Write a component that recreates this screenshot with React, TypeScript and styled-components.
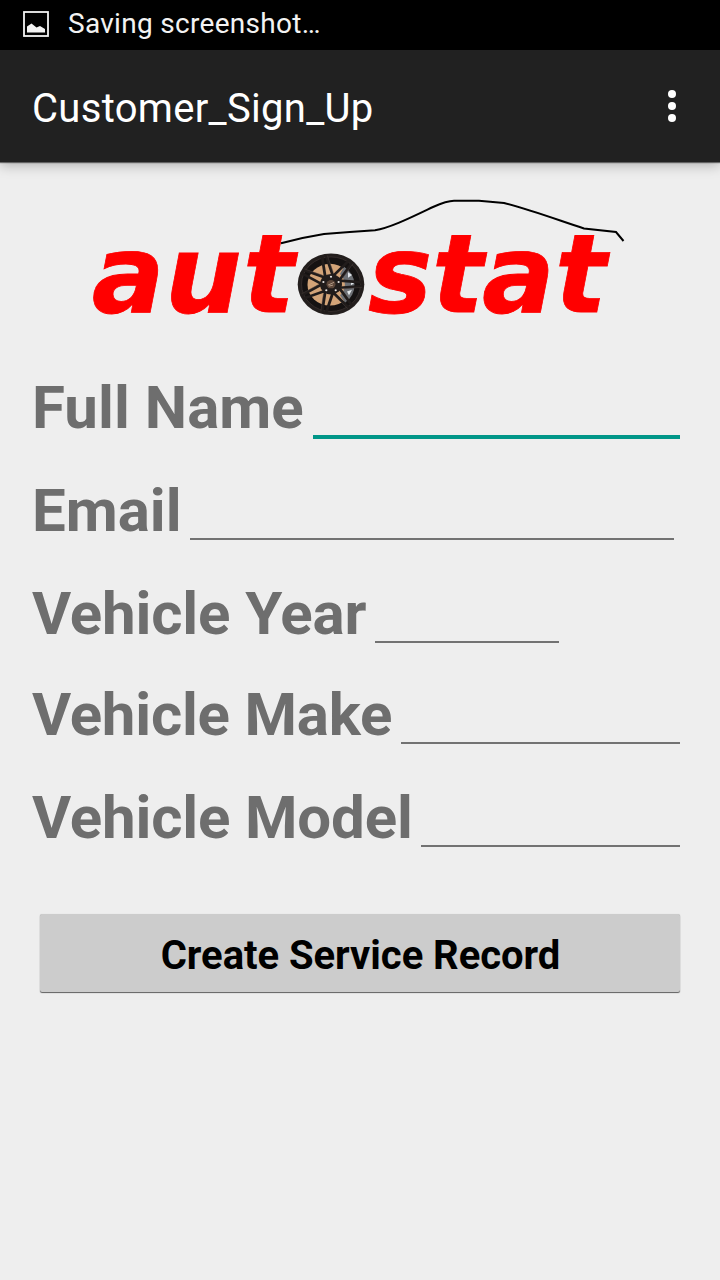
import React from "react";
import styled, { createGlobalStyle } from "styled-components";

const GlobalStyle = createGlobalStyle`
  *, *::before, *::after { box-sizing: border-box; }
  body { margin: 0; background: #eeeeee; font-family: Roboto, "Liberation Sans", sans-serif; }
`;

const Screen = styled.div`
  width: 720px;
  height: 1280px;
  display: flex;
  flex-direction: column;
  background: #eeeeee;
  overflow: hidden;
`;

const StatusBar = styled.div`
  height: 50px;
  padding: 0 23px 2px;
  display: flex;
  align-items: center;
  gap: 19px;
  background: #000;
  color: #f3f3f3;
`;

const StatusText = styled.span`
  padding-bottom: 2px;
  font-size: 28px;
  line-height: 33px;
  letter-spacing: 0.3px;
`;

const AppBar = styled.header`
  height: 112px;
  padding: 0 44px 0 32px;
  display: flex;
  align-items: center;
  justify-content: space-between;
  background: #212121;
  box-shadow: 0 1px 1px rgba(0, 0, 0, 0.5), 0 3px 12px rgba(0, 0, 0, 0.28);
`;

const Title = styled.h1`
  margin: 0;
  padding-top: 5px;
  color: #fff;
  font-size: 40px;
  font-weight: 400;
  line-height: 48px;
  letter-spacing: 0.31px;
`;

const Overflow = styled.button`
  padding: 0;
  border: 0;
  background: none;
  display: flex;
  flex-direction: column;
  gap: 4px;
`;

const Dot = styled.span`
  width: 8px;
  height: 8px;
  border-radius: 50%;
  background: #fff;
`;

const Content = styled.main`
  flex: 1;
  padding: 22px 32px 0;
  display: flex;
  flex-direction: column;
`;

const Logo = styled.svg`
  display: block;
  width: 560px;
  height: 160px;
  margin-left: 48px;
  flex: none;
`;

const Form = styled.form`
  margin-top: 18px;
  display: flex;
  flex-direction: column;
`;

const Row = styled.div<{ $height: number }>`
  height: ${(p) => p.$height}px;
  display: flex;
  align-items: flex-start;
`;

const Label = styled.label<{ $width: number; $spacing: number }>`
  width: ${(p) => p.$width}px;
  flex: none;
  color: #6e6e6e;
  font-size: 60px;
  font-weight: 700;
  line-height: 92px;
  letter-spacing: ${(p) => p.$spacing}px;
  white-space: nowrap;
`;

const Field = styled.input<{ $width: number; $height: number; $active?: boolean }>`
  width: ${(p) => p.$width}px;
  height: ${(p) => p.$height}px;
  padding: 0;
  border: 0;
  border-bottom: ${(p) => (p.$active ? "4px solid #009688" : "2px solid #727272")};
  border-radius: 0;
  outline: none;
  background: transparent;
  font: 36px Roboto, sans-serif;
`;

const Submit = styled.button`
  height: 78px;
  margin: 36px 8px 0;
  padding: 5px 0 0 1px;
  border: 0;
  border-radius: 2px;
  background: #cccccc;
  color: #000;
  font: 700 40px/48px Roboto, sans-serif;
  letter-spacing: -0.04px;
  box-shadow: 0 1px 1px rgba(0, 0, 0, 0.6), 0 0 1px rgba(0, 0, 0, 0.15);
`;

const fields = [
  { label: "Full Name", spacing: 0.05, labelWidth: 281, width: 367, fieldHeight: 77, row: 103, active: true },
  { label: "Email", spacing: 0, labelWidth: 158, width: 484, fieldHeight: 75, row: 103 },
  { label: "Vehicle Year", spacing: -0.14, labelWidth: 343, width: 184, fieldHeight: 75, row: 101 },
  { label: "Vehicle Make", spacing: -0.22, labelWidth: 369, width: 279, fieldHeight: 75, row: 103 },
  { label: "Vehicle Model", spacing: -0.16, labelWidth: 389, width: 259, fieldHeight: 75, row: 106 },
];

const spokeAngles = [0, 1, 2, 3, 4, 5, 6].map((k) => (360 / 7) * (k + 0.5));
const lugAngles = [-90, -18, 54, 126, 198];

function Wheel() {
  return (
    <g transform="translate(331 284.2) scale(1 0.925)">
      <circle r="33.3" fill="#231e1d" />
      <circle r="29.5" fill="#151212" stroke="#3a3230" strokeWidth="0.8" />
      <circle cx="-1" cy="0.5" r="22.5" fill="#d3a478" />
      <path d="M13-19A24 24 0 0 1 14 20L9 12A16 16 0 0 0 9-11Z" fill="#6d7075" />
      <path d="M17-13l4 3-4 3zM20-3l3 2-3 2zM16 8l5-2-3 6z" fill="#e1e6ea" />
      {spokeAngles.map((a) => (
        <g key={a} transform={`rotate(${a})`} fill="none" stroke="#211c1b" strokeWidth="2.8">
          <path d="M29.5 -12L9 0L29.500 12" />
          <path d="M29.5 -10.500L13 -0.700" stroke="#4a403d" strokeWidth="0.5" />
        </g>
      ))}
      <circle r="11" fill="#211c1b" />
      <circle r="4.5" fill="#5c4639" />
      <path d="M-3 1L3-2M-2 2L2 1" stroke="#bda58e" strokeWidth="0.9" />
      {lugAngles.map((a) => (
        <circle
          key={a}
          cx={8 * Math.cos((a * Math.PI) / 180)}
          cy={8 * Math.sin((a * Math.PI) / 180)}
          r="1.1"
          fill="#e8e5e2"
        />
      ))}
    </g>
  );
}

export default function App() {
  return (
    <>
      <GlobalStyle />
      <Screen>
        <StatusBar>
          <svg width="26" height="26" viewBox="0 0 26 26">
            <rect x="1" y="1" width="24" height="24" fill="none" stroke="#f3f3f3" strokeWidth="1.8" />
            <path d="M4 21.5V15.500L8.500 12.500L13.500 16.500L17 15L22 18V21.500Z" fill="#f3f3f3" />
          </svg>
          <StatusText>Saving screenshot…</StatusText>
        </StatusBar>
        <AppBar>
          <Title>Customer_Sign_Up</Title>
          <Overflow type="button" aria-label="More options">
            <Dot />
            <Dot />
            <Dot />
          </Overflow>
        </AppBar>
        <Content>
          <Logo viewBox="80 184 560 160">
            <path
              d="M281 243.200Q302 237.500 324 234Q350 231.800 375 230.200C390 228 412 217 433 207C442 203 449 200.800 454 200.800H479L504 203C527 208.500 558 220 584 228.500L616 232L623.500 241"
              fill="none"
              stroke="#000"
              strokeWidth="2"
            />
            <g
              fill="#ff0000"
              stroke="#ff0000"
              strokeWidth="0.8"
              fontFamily='"DejaVu Sans", Verdana, sans-serif'
              fontSize="108"
              fontWeight="700"
              fontStyle="oblique"
            >
              <text x="91.8 165.1 243" y="312">aut</text>
              <text x="368 432.1 481.9 555.1" y="312">stat</text>
            </g>
            <Wheel />
          </Logo>
          <Form>
            {fields.map((f, i) => (
              <Row key={f.label} $height={f.row}>
                <Label htmlFor={`field-${i}`} $width={f.labelWidth} $spacing={f.spacing}>
                  {f.label}
                </Label>
                <Field id={`field-${i}`} $width={f.width} $height={f.fieldHeight} $active={f.active} />
              </Row>
            ))}
            <Submit type="button">Create Service Record</Submit>
          </Form>
        </Content>
      </Screen>
    </>
  );
}
